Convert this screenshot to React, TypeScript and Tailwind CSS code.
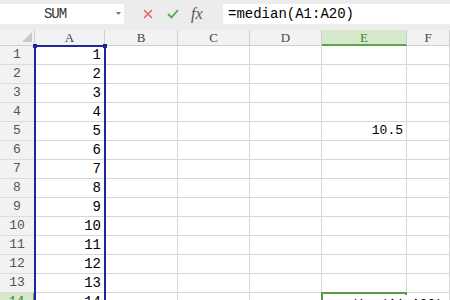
import React from "react";

const cols = ["A", "B", "C", "D", "E", "F"];
const rows = Array.from({ length: 15 }, (_, i) => i + 1);
const colW = ["w-[70px]", "w-[73px]", "w-[72px]", "w-[72px]", "w-[85px]", "flex-1"];

function cellText(col: string, row: number) {
  if (col === "A") return String(row);
  if (col === "E" && row === 5) return "10.5";
  return "";
}

export default function App() {
  return (
    <div className="w-[450px] h-[300px] overflow-hidden bg-white font-['Liberation_Mono',monospace] select-none">
      {/* Toolbar */}
      <div className="flex h-[30px] bg-[#ececec] pt-[4px]">
        <div className="relative w-[124px] h-[20px] bg-white flex items-center">
          <span className="w-[110px] text-center text-[14px] text-[#333] tracking-[-1px]">SUM</span>
          <svg className="absolute left-[116px] top-[8px]" width="5" height="3" viewBox="0 0 5 3">
            <polygon points="0,0 5,0 2.5,3" fill="#777" />
          </svg>
        </div>
        <div className="flex items-center w-[99px] h-[20px]">
          <svg className="ml-[19px]" width="10" height="10" viewBox="0 0 10 10">
            <path d="M1 1 L9 9 M9 1 L1 9" stroke="#e26b6b" strokeWidth="1.6" />
          </svg>
          <svg className="ml-[14px]" width="12" height="10" viewBox="0 0 12 10">
            <path d="M1 5 L4.5 8.5 L11 1" stroke="#4caa4c" strokeWidth="1.8" fill="none" />
          </svg>
          <span className="ml-[12px] text-[16px] italic text-[#555] font-['Liberation_Serif',serif] leading-none">fx</span>
        </div>
        <div className="flex-1 h-[20px] bg-white flex items-center pl-[5px] text-[14px] text-black">
          =median(A1:A20)
        </div>
      </div>

      {/* Sheet */}
      <div className="relative">
        {/* Column headers */}
        <div className="flex h-[16px]">
          <div className="relative w-[35px] bg-[#f2f2f2] border-r border-b border-[#cfcfcf]">
            <svg className="absolute left-[22px] top-[2px]" width="10" height="10" viewBox="0 0 10 10">
              <polygon points="10,0 10,10 0,10" fill="#c8c8c8" />
            </svg>
          </div>
          {cols.map((c, i) => (
            <div
              key={c}
              className={`${colW[i]} flex items-center justify-center border-r text-[13px] font-['Liberation_Serif',serif] leading-none ${
                c === "E"
                  ? "bg-[#d6e9cd] border-b-2 border-b-[#5aa844] border-r-[#cfcfcf] text-[#3b8a2a]"
                  : "bg-[#f2f2f2] border-b border-[#cfcfcf] text-[#444]"
              }`}
            >
              {c}
            </div>
          ))}
        </div>

        {/* Rows */}
        {rows.map((r) => (
          <div key={r} className="flex h-[19px]">
            <div
              className={`w-[35px] flex items-center justify-center text-[13px] border-b border-[#dcdcdc] ${
                r === 14
                  ? "bg-[#d6e9cd] border-r-2 border-r-[#5aa844] text-[#3b8a2a]"
                  : "bg-[#f2f2f2] border-r border-r-[#cfcfcf] text-[#555]"
              }`}
            >
              {r}
            </div>
            {cols.map((c, i) => (
              <div
                key={c}
                className={`${colW[i]} relative flex items-center justify-end pr-[3px] border-r border-b border-[#d6d6d6] text-black ${
                  c === "A" ? "text-[14px]" : "text-[13px]"
                }`}
              >
                {cellText(c, r)}
                {c === "E" && r === 14 && (
                  <>
                    <div className="absolute left-[-1px] top-[-1px] w-[86px] h-[20px] border-2 border-[#5b9a45]" />
                    <span className="absolute left-[4px] top-[2px] z-10 whitespace-nowrap text-[13px] bg-white pr-[4px]">
                      =median(A1:A20)
                    </span>
                  </>
                )}
              </div>
            ))}
          </div>
        ))}

        {/* Selection A1:A20 */}
        <div className="absolute left-[34px] top-[15px] w-[72px] h-[300px] border-2 border-[#23239b] pointer-events-none" />
        <div className="absolute left-[33px] top-[14px] w-[4px] h-[4px] bg-[#23239b]" />
        <div className="absolute left-[103px] top-[14px] w-[4px] h-[4px] bg-[#23239b]" />
      </div>
    </div>
  );
}
